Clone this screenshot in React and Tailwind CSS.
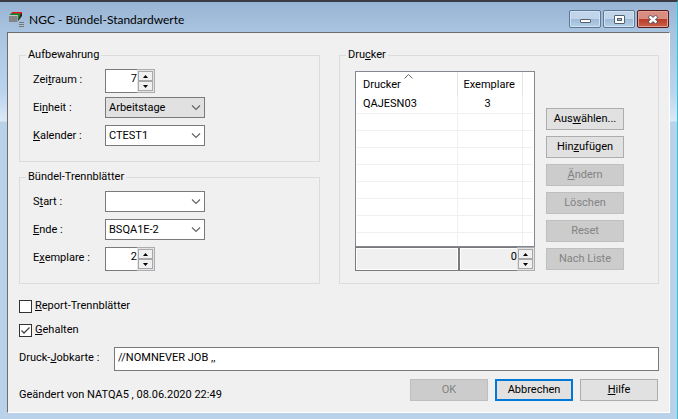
import React, { useState } from 'react';

function Chevron() {
    return (
        <svg className="pointer-events-none absolute right-1 top-[8px]" width="10" height="6" viewBox="0 0 10 6" fill="none" stroke="#666" strokeWidth="1.2">
            <path d="M1 0.5 L5 4.5 L9 0.5" />
        </svg>
    );
}

function Row({ id, label, children }) {
    return (
        <div className="flex h-6 items-start">
            <label htmlFor={id} className="w-[72px] shrink-0 leading-[22px]">{label}</label>
            {children}
        </div>
    );
}

function Combo({ id, options, grey }) {
    const [value, setValue] = useState(options[0]);

    return (
        <div className="relative w-[100px]">
            <select
                id={id}
                value={value}
                onChange={(e) => setValue(e.target.value)}
                className={`block h-[21px] w-full appearance-none border border-[#7a7a7a] pl-[3px] pr-4 leading-[18px] outline-none ${grey ? 'bg-[#e1e1e1]' : 'bg-white'}`}
            >
                {options.map((o) => <option key={o}>{o}</option>)}
            </select>
            <Chevron />
        </div>
    );
}

function SpinButtons({ onStep }) {
    return (
        <div className="flex w-[18px] shrink-0 flex-col border-y border-r border-[#abadb3] bg-[#e4e4e4] p-px">
            <button type="button" aria-label="+" onClick={() => onStep(1)} className="flex flex-1 items-center justify-center border border-[#a8a8a8] bg-[#f0f0f0]">
                <svg width="5" height="3" viewBox="0 0 5 3"><path d="M0 3 L2.5 0 L5 3 Z" fill="#000" /></svg>
            </button>
            <button type="button" aria-label="-" onClick={() => onStep(-1)} className="flex flex-1 items-center justify-center border border-[#a8a8a8] bg-[#f0f0f0]">
                <svg width="5" height="3" viewBox="0 0 5 3"><path d="M0 0 L2.5 3 L5 0 Z" fill="#000" /></svg>
            </button>
        </div>
    );
}

function Spinner({ id, start }) {
    const [value, setValue] = useState(start);

    return (
        <div className="flex h-6 w-[50px]">
            <input
                id={id}
                value={value}
                onChange={(e) => setValue(Number(e.target.value) || 0)}
                className="w-8 min-w-0 border-y border-l border-[#7a7a7a] bg-white pb-1 text-right outline-none"
            />
            <SpinButtons onStep={(d) => setValue(value + d)} />
        </div>
    );
}

function Group({ title, className, children }) {
    return (
        <fieldset className={`min-w-0 border border-[#dcdcdc] px-[6px] ${className}`}>
            <legend className="px-[2px] leading-4">{title}</legend>
            {children}
        </fieldset>
    );
}

function Button({ primary, disabled, children }) {
    let look = 'border border-[#adadad] bg-[#e1e1e1] text-black';
    if (primary) look = 'border-2 border-[#0078d7] bg-[#e1e1e1] text-black';
    if (disabled) look = 'border border-[#bfbfbf] bg-[#cccccc] text-[#838383]';

    return (
        <button type="button" disabled={disabled} className={`flex h-[22px] w-[78px] items-center justify-center whitespace-nowrap ${look}`}>
            <span>{children}</span>
        </button>
    );
}

function TitleBar() {
    return (
        <header className="flex h-[30px] items-start justify-between pl-2 pr-[8px]">
            <div className="flex items-center gap-[5px] pt-[9px]">
                <svg width="16" height="17" viewBox="0 0 16 17">
                    <path d="M4 1h10v2l-2 5v-5H3z" fill="#e01818" />
                    <path d="M14 2v3l-4 5V5z" fill="#2c2020" />
                    <path d="M2.5 2.5h10l-2 2H1z" fill="#0c8a2a" />
                    <path d="M12 3v2l-2 4V4z" fill="#0c8a2a" />
                    <path d="M1 4h9l-1 1.5H1z" fill="#c4c4c4" />
                    <path d="M1 5h8.5v6H1z" fill="#858585" />
                    <path d="M11 11.5h5M11 13.5h5M11 15.5h5" stroke="#777" />
                </svg>
                <h1 className="font-['Lato','Open_Sans',sans-serif] text-[12px] leading-4 text-black">NGC - Bündel-Standardwerte</h1>
            </div>
            <div className="flex gap-[2px] pt-[8px]">
                <button type="button" aria-label="Minimieren" className="flex h-[18px] w-8 items-center justify-center rounded-[2px] border border-[#5d7896] bg-linear-to-b from-[#c0d5ea] from-50% via-[#9dbad7] via-50% to-[#b4d0e8] shadow-[inset_0_0_0_1px_#d3e2f1]">
                    <svg className="mt-[3px]" width="11" height="4" viewBox="0 0 11 4"><rect x="0.5" y="0.5" width="10" height="3" rx="0.5" fill="#fff" stroke="#53606e" /></svg>
                </button>
                <button type="button" aria-label="Maximieren" className="flex h-[18px] w-8 items-center justify-center rounded-[2px] border border-[#5d7896] bg-linear-to-b from-[#c0d5ea] from-50% via-[#9dbad7] via-50% to-[#b4d0e8] shadow-[inset_0_0_0_1px_#d3e2f1]">
                    <svg width="11" height="9" viewBox="0 0 11 9">
                        <rect x="0.5" y="0.5" width="10" height="8" rx="0.5" fill="#fff" stroke="#53606e" />
                        <rect x="3.5" y="3.5" width="4" height="2" fill="#9dbcda" stroke="#53606e" />
                    </svg>
                </button>
                <button type="button" aria-label="Schließen" className="flex h-[18px] w-8 items-center justify-center rounded-[2px] border border-[#571a17] bg-linear-to-b from-[#d98c80] from-50% via-[#b93a22] via-50% to-[#cb6048] shadow-[inset_0_0_0_1px_#e0a196]">
                    <svg width="12" height="9" viewBox="0 0 12 9">
                        <path d="M2 1l8 7M10 1l-8 7" stroke="#53505e" strokeWidth="4" />
                        <path d="M2.5 1.5l7 6M9.5 1.5l-7 6" stroke="#fff" strokeWidth="2.4" />
                    </svg>
                </button>
            </div>
        </header>
    );
}

const printers = [{ name: 'QAJESN03', copies: 3 }];
const emptyRows = [0, 1, 2, 3, 4, 5, 6];

function PrinterList() {
    const [copies, setCopies] = useState(0);

    return (
        <div className="min-w-0 flex-1">
            <div className="h-[176px] overflow-hidden border border-[#828790] bg-white px-px">
                <table className="w-full table-fixed border-collapse">
                    <thead>
                        <tr className="h-6">
                            <th className="relative w-[100px] border-r border-[#e5e5e5] pl-[6px] pt-[2px] text-left font-normal">
                                Drucker
                                <svg className="absolute left-[47px] top-[2px]" width="9" height="5" viewBox="0 0 9 5" fill="none" stroke="#666"><path d="M0.5 4.5 L4.5 0.5 L8.5 4.5" /></svg>
                            </th>
                            <th className="w-[65px] border-r border-[#e5e5e5] pl-[6px] pt-[2px] text-left font-normal">Exemplare</th>
                            <th />
                        </tr>
                    </thead>
                    <tbody>
                        {printers.map((p) => (
                            <tr key={p.name} className="h-[17px] border-b border-[#f0f0f0]">
                                <td className="border-r border-[#f0f0f0] pl-[6px] leading-4">{p.name}</td>
                                <td className="border-r border-[#f0f0f0] pr-[4px] text-center leading-4">{p.copies}</td>
                                <td />
                            </tr>
                        ))}
                        {emptyRows.map((n) => (
                            <tr key={n} className="h-[17px] border-b border-[#f0f0f0]">
                                <td className="border-r border-[#f0f0f0]" />
                                <td className="border-r border-[#f0f0f0]" />
                                <td />
                            </tr>
                        ))}
                        <tr className="h-[13px]">
                            <td className="border-r border-[#f0f0f0]" />
                            <td className="border-r border-[#f0f0f0]" />
                            <td />
                        </tr>
                    </tbody>
                </table>
            </div>
            <div className="flex h-6">
                <input aria-label="Drucker" disabled className="min-w-0 flex-1 border border-[#7a7a7a] bg-[#f0f0f0] shadow-[inset_0_0_0_1px_#fff]" />
                <input
                    aria-label="Exemplare"
                    value={copies}
                    onChange={(e) => setCopies(Number(e.target.value) || 0)}
                    className="w-[58px] border-y border-l border-[#7a7a7a] bg-[#f0f0f0] pb-1 text-right shadow-[inset_1px_1px_0_#fff,inset_0_-1px_0_#fff] outline-none"
                />
                <SpinButtons onStep={(d) => setCopies(copies + d)} />
            </div>
        </div>
    );
}

function CheckBox({ checked, children }) {
    return (
        <label className="flex h-6 items-center gap-[3px]">
            <span className="relative block size-[13px]">
                <input type="checkbox" defaultChecked={checked} className="peer block size-[13px] appearance-none border border-[#333] bg-white" />
                <svg className="pointer-events-none absolute inset-0 hidden peer-checked:block" width="13" height="13" viewBox="0 0 13 13" fill="none" stroke="#444" strokeWidth="1.3">
                    <path d="M2.5 6.5 L5 9 L10.5 3.5" />
                </svg>
            </span>
            <span>{children}</span>
        </label>
    );
}

export default function App() {
    return (
        <div className="flex min-h-screen flex-col border-b border-r border-t-2 border-b-[#2ec4dc] border-r-[#2ec4dc] border-t-[#3b3b45] bg-[#bad1ea] bg-[linear-gradient(#98b4d3,#a9c4e0_30px,#bad4ee_90px,#dce9f6_119px,#bad1ea_120px)] font-[Roboto,'Liberation_Sans',sans-serif] text-[11px] leading-4 text-black">
            <TitleBar />
            <main className="mx-[7px] mb-[7px] flex-1 border border-b-white border-l-[#6d6d6d] border-r-white border-t-[#6d6d6d] bg-[#f0f0f0] pb-[9px] pl-[11px] pr-[10px] pt-[14px]">
                <div className="flex gap-[19px]">
                    <div className="flex w-[301px] shrink-0 flex-col gap-[7px]">
                        <Group title="Aufbewahrung" className="pb-3">
                            <div className="flex flex-col gap-1 pl-[7px] pt-[6px]">
                                <Row id="zeitraum" label={<>Zei<u>t</u>raum :</>}><Spinner id="zeitraum" start={7} /></Row>
                                <Row id="einheit" label={<>Ei<u>n</u>heit :</>}><Combo id="einheit" options={['Arbeitstage']} grey /></Row>
                                <Row id="kalender" label={<><u>K</u>alender :</>}><Combo id="kalender" options={['CTEST1']} /></Row>
                            </div>
                        </Group>
                        <Group title="Bündel-Trennblätter" className="pb-3">
                            <div className="flex flex-col gap-1 pl-[7px] pt-[6px]">
                                <Row id="start" label={<>S<u>t</u>art :</>}><Combo id="start" options={['']} /></Row>
                                <Row id="ende" label={<><u>E</u>nde :</>}><Combo id="ende" options={['BSQA1E-2']} /></Row>
                                <Row id="exemplare" label={<>E<u>x</u>emplare :</>}><Spinner id="exemplare" start={2} /></Row>
                            </div>
                        </Group>
                    </div>
                    <Group title={<>Dru<u>c</u>ker</>} className="flex-1">
                        <div className="flex gap-[11px] pl-[9px] pr-[28px] pt-2">
                            <PrinterList />
                            <div className="flex flex-col gap-[6px] pt-[37px]">
                                <Button>Aus<u>w</u>ählen...</Button>
                                <Button>Hin<u>z</u>ufügen</Button>
                                <Button disabled><u>Ä</u>ndern</Button>
                                <Button disabled>Löschen</Button>
                                <Button disabled>Reset</Button>
                                <Button disabled>Nach Liste</Button>
                            </div>
                        </div>
                    </Group>
                </div>
                <div className="pt-[10px]">
                    <CheckBox><u>R</u>eport-Trennblätter</CheckBox>
                    <CheckBox checked><u>G</u>ehalten</CheckBox>
                </div>
                <div className="flex pt-[5px]">
                    <label htmlFor="jobkarte" className="w-[95px] leading-[22px]">Druck-<u>J</u>obkarte :</label>
                    <input id="jobkarte" defaultValue="//NOMNEVER JOB ,," className="h-6 min-w-0 flex-1 border border-[#7a7a7a] bg-white pb-1 pl-[3px] outline-none" />
                </div>
                <div className="flex items-start justify-between pt-2">
                    <p className="pt-2">Geändert von NATQA5 , 08.06.2020 22:49</p>
                    <div className="flex gap-[7px] pr-px">
                        <Button disabled>OK</Button>
                        <Button primary>Abbrechen</Button>
                        <Button><u>H</u>ilfe</Button>
                    </div>
                </div>
            </main>
        </div>
    );
}
